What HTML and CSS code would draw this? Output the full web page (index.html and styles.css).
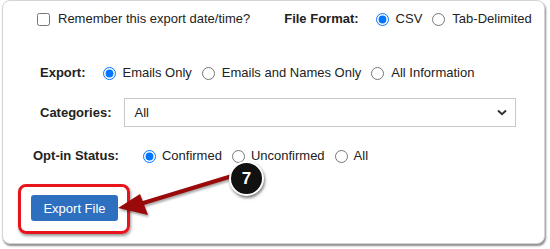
FILE: index.html
```html
<!DOCTYPE html>
<html>
<head>
<meta charset="utf-8">
<link rel="stylesheet" href="styles.css">
</head>
<body>
<div class="frame">
  <div class="row row1">
    <label class="opt chk"><input type="checkbox"><span>Remember this export date/time?</span></label>
    <span class="lbl fmt">File Format:</span>
    <label class="opt"><input type="radio" name="f" checked><span>CSV</span></label>
    <label class="opt"><input type="radio" name="f"><span>Tab-Delimited</span></label>
  </div>
  <div class="row row2">
    <span class="lbl">Export:</span>
    <label class="opt"><input type="radio" name="e" checked><span>Emails Only</span></label>
    <label class="opt"><input type="radio" name="e"><span>Emails and Names Only</span></label>
    <label class="opt"><input type="radio" name="e"><span>All Information</span></label>
  </div>
  <div class="row row3">
    <span class="lbl">Categories:</span>
    <div class="select"><span>All</span>
      <svg class="chev" width="10" height="7" viewBox="0 0 10 7"><path d="M1 1.5 L5 5.2 L9 1.5" fill="none" stroke="#333" stroke-width="2"/></svg>
    </div>
  </div>
  <div class="row row4">
    <span class="lbl">Opt-in Status:</span>
    <label class="opt"><input type="radio" name="o" checked><span>Confirmed</span></label>
    <label class="opt"><input type="radio" name="o"><span>Unconfirmed</span></label>
    <label class="opt"><input type="radio" name="o"><span>All</span></label>
  </div>
  <div class="row row5">
    <button class="btn">Export File</button>
  </div>

  <div class="highlight"></div>
  <svg class="arrow" width="550" height="249" viewBox="0 0 550 249">
    <line x1="232" y1="176" x2="140" y2="204" stroke="#9a0a0a" stroke-width="4"/>
    <polygon points="118,208 140,194 148,215" fill="#9a0a0a"/>
  </svg>
  <div class="badge">7</div>
</div>
</body>
</html>
```

FILE: styles.css
```css
* { box-sizing: border-box; }
html, body { margin: 0; padding: 0; background: #fff; }
body {
  font-family: Arial, "Liberation Sans", sans-serif;
  font-size: 13px;
  color: #222;
  width: 550px;
  height: 249px;
  overflow: hidden;
}
.frame {
  position: relative;
  margin-left: 2px;
  width: 543px;
  height: 244px;
  border: 1px solid #d4d4d4;
  border-radius: 8px;
  box-shadow: 1px 2px 2px rgba(0,0,0,0.45);
  padding-top: 11px;
  background: #fff;
}
.row {
  display: flex;
  align-items: center;
  height: 14px;
  line-height: 14px;
  white-space: nowrap;
}
.opt {
  display: flex;
  align-items: center;
  gap: 7px;
  margin-right: 10px;
}
.opt input {
  margin: 0;
  width: 13px;
  height: 13px;
}
.lbl { font-weight: bold; }
.row1 { padding-left: 34px; }
.row1 .chk { gap: 8px; margin-right: 34px; }
.row1 .fmt { margin-right: 17px; }
.row2 { margin-top: 40px; padding-left: 37px; }
.row2 .lbl { margin-right: 17px; }
.row3 { margin-top: 18px; padding-left: 37px; height: 29px; }
.row3 .lbl { margin-right: 12px; }
.select {
  width: 392px;
  height: 29px;
  border: 1px solid #c8c8c8;
  display: flex;
  align-items: center;
  justify-content: space-between;
  padding: 0 8px 0 10px;
}
.row4 { margin-top: 22px; padding-left: 30px; }
.row4 .lbl { margin-right: 24px; }
.row4 .opt { gap: 6px; margin-right: 10px; }
.row5 { margin-top: 32px; padding-left: 28px; height: 26px; }
.btn {
  width: 87px;
  height: 26px;
  background: #2f6fbf;
  color: #fff;
  border: none;
  border-radius: 3px;
  font-family: Arial, "Liberation Sans", sans-serif;
  font-size: 13px;
  padding: 0;
}
.highlight {
  position: absolute;
  left: 15px;
  top: 183px;
  width: 112px;
  height: 50px;
  border: 3px solid #e8141c;
  border-radius: 8px;
  box-shadow: 1px 2px 3px rgba(0,0,0,0.4);
}
.arrow {
  position: absolute;
  left: -3px;
  top: -1px;
  filter: drop-shadow(1px 2px 1px rgba(0,0,0,0.35));
}
.badge {
  position: absolute;
  left: 226px;
  top: 160px;
  width: 35px;
  height: 35px;
  border-radius: 50%;
  background: #111;
  border: 2px solid #fff;
  box-shadow: 1px 2px 3px rgba(0,0,0,0.5);
  color: #fff;
  font-weight: bold;
  font-size: 17px;
  display: flex;
  align-items: center;
  justify-content: center;
}
```
